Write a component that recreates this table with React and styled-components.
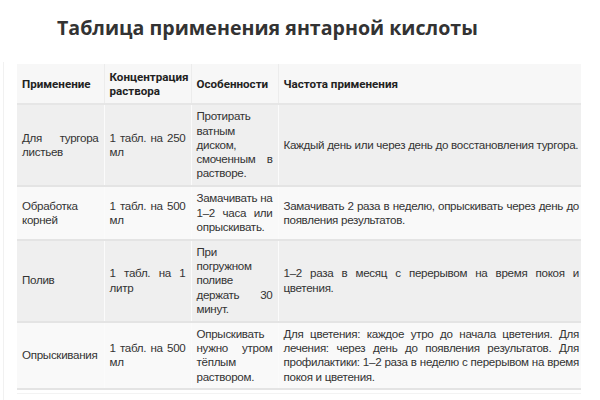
import React from 'react';
import styled, { createGlobalStyle } from 'styled-components';

const GlobalStyle = createGlobalStyle`
  html, body {
    margin: 0;
    padding: 0;
    background: #ffffff;
  }
  body {
    width: 600px;
    height: 400px;
    overflow: hidden;
  }
`;

const Page = styled.div`
  width: 600px;
  height: 400px;
  box-sizing: border-box;
  padding-top: 14px;
`;

const Title = styled.h2`
  margin: 0 0 0 57px;
  font-family: 'Open Sans', sans-serif;
  font-weight: 700;
  font-size: 19.6px;
  line-height: 28px;
  color: #333333;
`;

const Content = styled.div`
  margin-top: 20px;
  margin-left: 3px;
  padding: 2px 0 4px 13px;
  border-left: 1px solid #f1f1f1;
  height: 340px;
  box-sizing: border-box;
`;

const TableClip = styled.div`
  width: 564px;
  overflow: hidden;
  border-bottom: 1px solid #f3f3f3;
  padding-bottom: 3px;
`;

const Table = styled.table`
  width: 567px;
  table-layout: fixed;
  border-collapse: collapse;
  font-family: 'Liberation Sans', Arial, sans-serif;
  font-size: 11.6px;
  letter-spacing: -0.3px;
  line-height: 14.2px;
  color: #333333;
`;

const HeadCell = styled.th`
  background: #f7f7f7;
  font-family: Roboto, 'Liberation Sans', sans-serif;
  font-weight: 700;
  font-size: 11.6px;
  letter-spacing: 0;
  line-height: 14.2px;
  color: #222222;
  text-align: left;
  vertical-align: middle;
  padding: 6px 5px 5px;
  border-left: 1px solid #ececec;
  border-bottom: 2px solid #e6e6e6;
  &:first-child {
    border-left: none;
  }
`;

const Row = styled.tr`
  background: ${p => (p.$shade ? '#efefef' : '#f9f9f9')};
  border-bottom: 2px solid #e4e4e4;
`;

const Cell = styled.td`
  padding: 4px 5px ${p => (p.$tall ? 5 : 4)}px;
  vertical-align: middle;
  text-align: justify;
  border-left: 1px solid #fbfbfb;
  &:first-child {
    border-left: none;
  }
`;

const columns = [
  { title: 'Применение', width: 87 },
  { title: 'Концентрация раствора', width: 87 },
  { title: 'Особенности', width: 87 },
  { title: 'Частота применения' },
];

const rows = [
  [
    'Для тургора листьев',
    '1 табл. на 250 мл',
    'Протирать ватным диском, смоченным в растворе.',
    'Каждый день или через день до восстановления тургора.',
  ],
  [
    'Обработка корней',
    '1 табл. на 500 мл',
    'Замачивать на 1–2 часа или опрыскивать.',
    'Замачивать 2 раза в неделю, опрыскивать через день до появления результатов.',
  ],
  [
    'Полив',
    '1 табл. на 1 литр',
    'При погружном поливе держать 30 минут.',
    '1–2 раза в месяц с перерывом на время покоя и цветения.',
  ],
  [
    'Опрыскивания',
    '1 табл. на 500 мл',
    'Опрыскивать нужно утром тёплым раствором.',
    'Для цветения: каждое утро до начала цветения. Для лечения: через день до появления результатов. Для профилактики: 1–2 раза в неделю с перерывом на время покоя и цветения.',
  ],
];

export default function App() {
  return (
    <>
      <GlobalStyle />
      <Page>
        <Title>Таблица применения янтарной кислоты</Title>
        <Content>
          <TableClip>
            <Table>
              <colgroup>
                {columns.map((c, i) => (
                  <col key={i} style={c.width ? { width: c.width } : undefined} />
                ))}
              </colgroup>
              <thead>
                <tr>
                  {columns.map((c, i) => (
                    <HeadCell key={i}>{c.title}</HeadCell>
                  ))}
                </tr>
              </thead>
              <tbody>
                {rows.map((r, i) => (
                  <Row key={i} $shade={i % 2 === 0}>
                    {r.map((text, j) => (
                      <Cell key={j} $tall={i < 3}>{text}</Cell>
                    ))}
                  </Row>
                ))}
              </tbody>
            </Table>
          </TableClip>
        </Content>
      </Page>
    </>
  );
}
